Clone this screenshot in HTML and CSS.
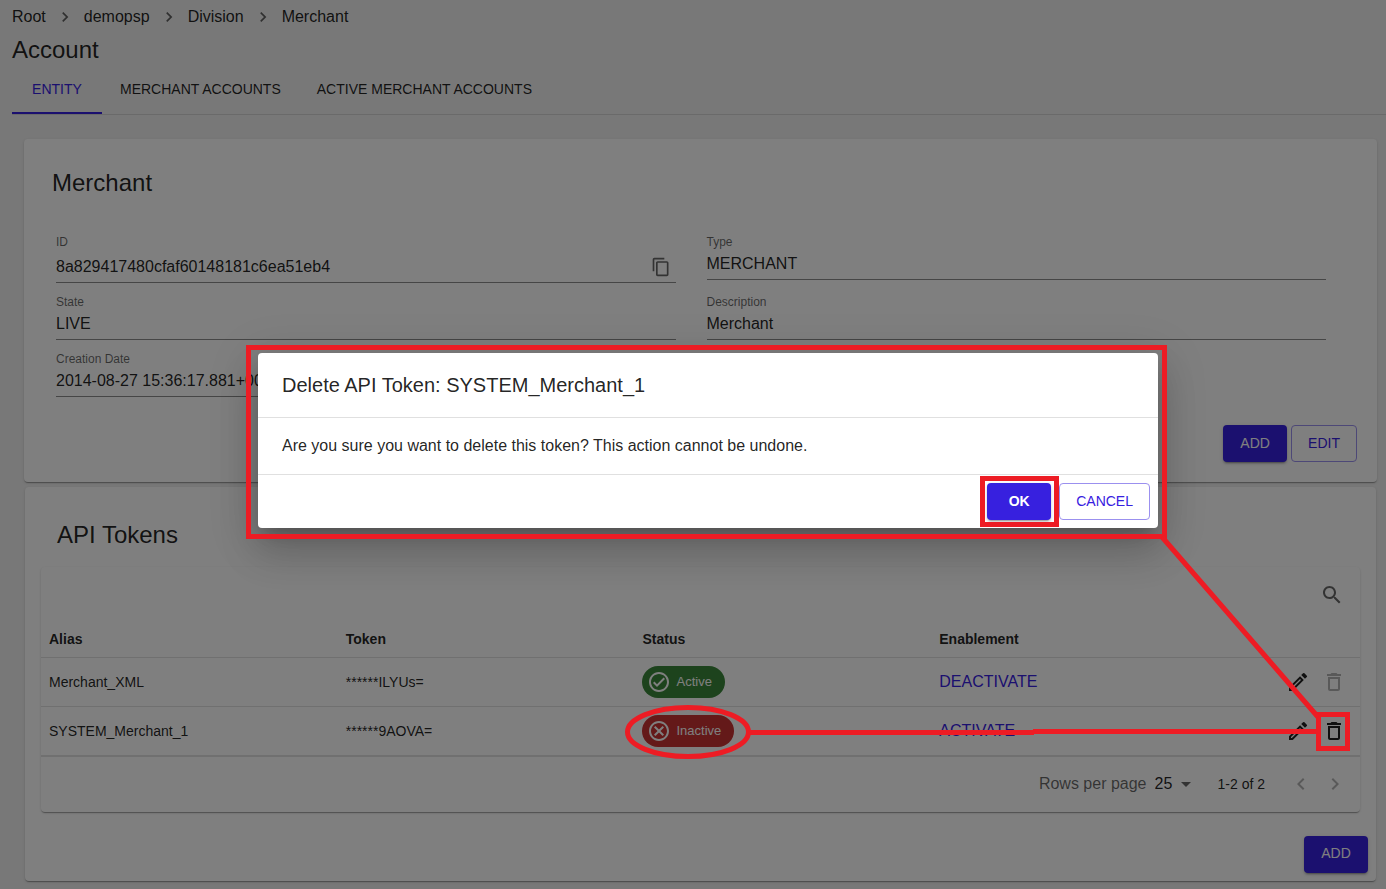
FILE: index.html
```html
<!DOCTYPE html>
<html lang="en">
<head>
<meta charset="utf-8">
<meta name="viewport" content="width=device-width, initial-scale=1">
<title>Account</title>
<link rel="stylesheet" href="styles.css">
</head>
<body>
<svg class="sprite" aria-hidden="true">
  <symbol id="next" viewBox="0 0 24 24"><path d="M10 6 8.590 7.410 13.170 12l-4.580 4.590L10 18l6-6z"/></symbol>
  <symbol id="prev" viewBox="0 0 24 24"><path d="M15.410 7.410 14 6l-6 6 6 6 1.410-1.410L10.830 12z"/></symbol>
  <symbol id="copy" viewBox="0 0 24 24"><path d="M16 1H4c-1.100 0-2 .9-2 2v14h2V3h12V1zm3 4H8c-1.100 0-2 .9-2 2v14c0 1.100.9 2 2 2h11c1.100 0 2-.9 2-2V7c0-1.100-.9-2-2-2zm0 16H8V7h11v14z"/></symbol>
  <symbol id="search" viewBox="0 0 24 24"><path d="M15.500 14h-.79l-.28-.27C15.410 12.590 16 11.110 16 9.500 16 5.910 13.090 3 9.500 3S3 5.910 3 9.500 5.910 16 9.500 16c1.610 0 3.090-.59 4.230-1.570l.27.28v.79l5 4.990L20.490 19l-4.990-5zm-6 0C7.010 14 5 11.990 5 9.500S7.010 5 9.500 5 14 7.010 14 9.500 11.990 14 9.500 14z"/></symbol>
  <symbol id="pencil" viewBox="0 0 24 24"><path d="M17.750 3a1 1 0 0 0-.7.290l-1.830 1.830 3.750 3.750 1.830-1.830a1 1 0 0 0 0-1.410l-2.340-2.340a1 1 0 0 0-.71-.29zM14.060 6.190 3 17.250V21h3.750L17.810 9.940l-3.750-3.750zm0 2.820.93.93L5.920 19H5v-.92l9.060-9.070z"/></symbol>
  <symbol id="trash" viewBox="0 0 24 24"><path d="M6 19c0 1.100.9 2 2 2h8c1.100 0 2-.9 2-2V7H6v12zM8 9h8v10H8V9zm7.500-5-1-1h-5l-1 1H5v2h14V4z"/></symbol>
  <symbol id="ok" viewBox="0 0 24 24"><path d="M12 2C6.480 2 2 6.480 2 12s4.480 10 10 10 10-4.480 10-10S17.520 2 12 2zm0 18c-4.410 0-8-3.590-8-8s3.590-8 8-8 8 3.590 8 8-3.590 8-8 8zm4.590-12.420L10 14.170l-2.590-2.580L6 13l4 4 8-8z"/></symbol>
  <symbol id="cross" viewBox="0 0 24 24"><path d="M12 2C6.470 2 2 6.470 2 12s4.470 10 10 10 10-4.470 10-10S17.530 2 12 2zm0 18c-4.410 0-8-3.590-8-8s3.590-8 8-8 8 3.590 8 8-3.590 8-8 8zM15.600 7 12 10.600 8.400 7 7 8.400 10.600 12 7 15.600 8.400 17 12 13.400 15.600 17 17 15.600 13.400 12 17 8.400z"/></symbol>
  <symbol id="drop" viewBox="0 0 24 24"><path d="m7 10 5 5 5-5z"/></symbol>
</svg>

<div class="page">
  <nav class="crumbs" aria-label="Breadcrumb">
    <a href="#">Root</a><svg class="icon-sm"><use href="#next"/></svg>
    <a href="#">demopsp</a><svg class="icon-sm"><use href="#next"/></svg>
    <a href="#">Division</a><svg class="icon-sm"><use href="#next"/></svg>
    <a href="#">Merchant</a>
  </nav>
  <h1 class="title">Account</h1>
  <div class="tabs" role="tablist">
    <button class="tab tab-active" role="tab" aria-selected="true">ENTITY</button>
    <button class="tab" role="tab">MERCHANT ACCOUNTS</button>
    <button class="tab" role="tab">ACTIVE MERCHANT ACCOUNTS</button>
  </div>

  <main class="cards">
    <section class="card entity">
      <h2 class="title">Merchant</h2>
      <div class="fields">
        <div class="field">
          <label for="id">ID</label>
          <div class="control control-icon">
            <input id="id" value="8a829417480cfaf60148181c6ea51eb4" readonly>
            <button class="icon-btn muted" aria-label="Copy ID"><svg class="icon-sm"><use href="#copy"/></svg></button>
          </div>
        </div>
        <div class="field">
          <label for="type">Type</label>
          <div class="control"><input id="type" value="MERCHANT" readonly></div>
        </div>
        <div class="field">
          <label for="state">State</label>
          <div class="control"><input id="state" value="LIVE" readonly></div>
        </div>
        <div class="field">
          <label for="description">Description</label>
          <div class="control"><input id="description" value="Merchant" readonly></div>
        </div>
        <div class="field">
          <label for="created">Creation Date</label>
          <div class="control"><input id="created" value="2014-08-27 15:36:17.881+0000" readonly></div>
        </div>
      </div>
      <div class="actions">
        <button class="btn btn-fill">ADD</button>
        <button class="btn btn-line">EDIT</button>
      </div>
    </section>

    <section class="card tokens">
      <h2 class="title">API Tokens</h2>
      <div class="card table-card">
        <div class="toolbar">
          <button class="icon-btn muted" aria-label="Search"><svg class="icon"><use href="#search"/></svg></button>
        </div>
        <table>
          <thead>
            <tr><th>Alias</th><th>Token</th><th>Status</th><th>Enablement</th><th class="tools"></th></tr>
          </thead>
          <tbody>
            <tr>
              <td>Merchant_XML</td><td>******ILYUs=</td>
              <td><span class="chip chip-on"><svg class="icon"><use href="#ok"/></svg>Active</span></td>
              <td><button class="link">DEACTIVATE</button></td>
              <td class="tools"><div class="tool-row">
                <button class="icon-btn" aria-label="Edit"><svg class="icon"><use href="#pencil"/></svg></button>
                <button class="icon-btn" aria-label="Delete" disabled><svg class="icon"><use href="#trash"/></svg></button>
              </div></td>
            </tr>
            <tr>
              <td>SYSTEM_Merchant_1</td><td>******9AOVA=</td>
              <td><span class="chip chip-off"><svg class="icon"><use href="#cross"/></svg>Inactive</span></td>
              <td><button class="link">ACTIVATE</button></td>
              <td class="tools"><div class="tool-row">
                <button class="icon-btn" aria-label="Edit"><svg class="icon"><use href="#pencil"/></svg></button>
                <button class="icon-btn" aria-label="Delete"><svg class="icon"><use href="#trash"/></svg></button>
              </div></td>
            </tr>
          </tbody>
        </table>
        <div class="pager">
          <label for="rows">Rows per page</label>
          <div class="select">
            <select id="rows"><option>25</option><option>50</option></select>
            <svg class="icon muted"><use href="#drop"/></svg>
          </div>
          <span class="range">1-2 of 2</span>
          <button class="icon-btn" aria-label="Previous page" disabled><svg class="icon"><use href="#prev"/></svg></button>
          <button class="icon-btn" aria-label="Next page" disabled><svg class="icon"><use href="#next"/></svg></button>
        </div>
      </div>
      <div class="actions"><button class="btn btn-fill">ADD</button></div>
    </section>
  </main>
</div>

<div class="backdrop">
  <div class="dialog" role="dialog" aria-modal="true" aria-labelledby="dialog-title">
    <h2 id="dialog-title">Delete API Token: SYSTEM_Merchant_1</h2>
    <p>Are you sure you want to delete this token? This action cannot be undone.</p>
    <div class="dialog-actions">
      <button class="btn btn-fill btn-strong">OK</button>
      <button class="btn btn-line">CANCEL</button>
    </div>
  </div>
</div>

<svg class="markup" viewBox="0 0 1386 889" aria-hidden="true">
  <rect x="248.500" y="347.500" width="916" height="189"/>
  <rect x="982.500" y="478.500" width="74" height="46"/>
  <rect x="1318.500" y="714.500" width="29" height="34"/>
  <ellipse cx="688" cy="732" rx="60.500" ry="24.500"/>
  <path d="M749 732.500H1034M1033 731.500H1317M1162 537 1318 717"/>
</svg>
</body>
</html>
```
FILE: styles.css
```css
* { box-sizing: border-box; }

:root {
  --ink: rgba(0, 0, 0, .87);
  --muted: rgba(0, 0, 0, .6);
  --rule: #e0e0e0;
  --primary: #3720df;
}

body {
  position: relative;
  min-height: 100vh;
  margin: 0;
  background: #f0f0f0;
  color: var(--ink);
  font: 16px/24px "Liberation Sans", Arial, sans-serif;
}

button, input, select { font: inherit; color: inherit; }
button { padding: 0; border: 0; background: none; cursor: pointer; }
svg { display: block; fill: currentColor; }

.sprite { position: absolute; width: 0; height: 0; }
.icon { width: 24px; height: 24px; flex: none; }
.icon-sm { width: 20px; height: 20px; flex: none; }
.muted { color: var(--muted); }

.page { padding: 5px 0 8px; }

.crumbs {
  display: flex;
  align-items: center;
  gap: 9px;
  padding-left: 12px;
}
.crumbs a { color: inherit; text-decoration: none; }
.crumbs svg { color: var(--muted); }

.title { margin: 0; font-size: 24px; line-height: 32px; font-weight: 400; }
.page > .title { padding: 5px 12px 0; }

.tabs {
  display: flex;
  margin-left: 12px;
  border-bottom: 1px solid #d4d4d4;
}
.tab {
  min-width: 90px;
  height: 48px;
  padding: 0 18px;
  border-bottom: 2px solid transparent;
  font-size: 14px;
}
.tab-active { color: var(--primary); border-color: var(--primary); }

.cards {
  display: flex;
  flex-direction: column;
  gap: 5px;
  padding: 24px 9px 0 24px;
}
.card {
  border-radius: 4px;
  background: #fff;
  box-shadow: 0 2px 1px -1px rgba(0, 0, 0, .2), 0 1px 1px rgba(0, 0, 0, .14), 0 1px 3px rgba(0, 0, 0, .12);
}

.entity { padding: 28px 20px 20px 28px; }
.fields {
  display: grid;
  grid-template-columns: 1fr 1fr;
  gap: 10px 31px;
  margin: 34px 31px 28px 4px;
}
.field label {
  display: block;
  color: var(--muted);
  font-size: 12px;
  line-height: 18px;
}
.control {
  display: flex;
  align-items: center;
  padding: 1px 0 3px;
  border-bottom: 1px solid #8c8c8c;
}
.control input {
  flex: 1;
  min-width: 0;
  height: 24px;
  padding: 0;
  border: 0;
  outline: 0;
  background: none;
}
.control-icon { height: 32px; padding: 0 5px 0 0; }

.actions { display: flex; justify-content: flex-end; gap: 4px; }
.btn {
  min-width: 64px;
  height: 37px;
  padding: 0 16px 2px;
  border: 1px solid transparent;
  border-radius: 4px;
  font-size: 14px;
}
.btn-fill {
  padding: 0 15px 2px;
  background: var(--primary);
  color: #fff;
  box-shadow: 0 3px 1px -2px rgba(0, 0, 0, .2), 0 2px 2px rgba(0, 0, 0, .14), 0 1px 5px rgba(0, 0, 0, .12);
}
.btn-line { color: var(--primary); border-color: #9b90ef; }
.btn-strong { font-weight: 700; }

.tokens { margin: 0 1px; padding: 32px 8px 8px 16px; }
.tokens > .title { padding-left: 16px; }
.table-card { margin: 16px 8px 24px 0; }
.toolbar {
  display: flex;
  justify-content: flex-end;
  height: 55px;
  padding: 0 16px 0 0;
}

table {
  width: 100%;
  border-collapse: collapse;
  table-layout: fixed;
  font-size: 14px;
}
th, td {
  height: 49px;
  padding: 0 8px;
  border-bottom: 1px solid var(--rule);
  text-align: left;
}
th { height: 35px; }
.tools { width: 132px; }
td.tools { padding-right: 14px; }
.tool-row { display: flex; justify-content: flex-end; gap: 12px; }
.icon-btn { display: flex; align-items: center; }
.icon-btn:disabled { color: rgba(0, 0, 0, .3); cursor: default; }
.link { color: var(--primary); font-size: 16px; }

.chip {
  display: inline-flex;
  align-items: center;
  gap: 6px;
  height: 32px;
  margin-left: -1px;
  padding: 0 13px 0 5px;
  border-radius: 16px;
  color: #fff;
  font-size: 13px;
  vertical-align: middle;
}
.chip-on { background: #3b873a; }
.chip-off { background: #c83232; }

.pager {
  display: flex;
  align-items: center;
  justify-content: flex-end;
  height: 56px;
  padding-right: 13px;
  border-top: 1px solid var(--rule);
}
.pager label { color: var(--muted); }
.select { position: relative; margin: 0 20px 0 8px; }
.select select {
  width: 43px;
  height: 24px;
  padding: 0;
  border: 0;
  background: none;
  appearance: none;
}
.select svg { position: absolute; right: 0; top: 0; pointer-events: none; }
.range { margin-right: 24px; font-size: 14px; }
.pager .icon-btn + .icon-btn { margin-left: 10px; }

.backdrop {
  position: absolute;
  inset: 0;
  display: flex;
  align-items: center;
  justify-content: center;
  padding: 0 0 8px 30px;
  background: rgba(0, 0, 0, .5);
}
.dialog {
  width: 900px;
  max-width: 90%;
  border-radius: 4px;
  background: #fff;
  box-shadow: 0 11px 15px -7px rgba(0, 0, 0, .2), 0 24px 38px 3px rgba(0, 0, 0, .14), 0 9px 46px 8px rgba(0, 0, 0, .12);
}
.dialog h2 {
  margin: 0;
  padding: 16px 24px;
  font-size: 20px;
  line-height: 32px;
  font-weight: 400;
}
.dialog p {
  margin: 0;
  padding: 16px 24px;
  border: solid var(--rule);
  border-width: 1px 0;
}
.dialog-actions { display: flex; justify-content: flex-end; gap: 8px; padding: 8px; }

.markup {
  position: absolute;
  top: 0;
  left: 0;
  width: 1386px;
  height: 889px;
  fill: none;
  stroke: #ed1c24;
  stroke-width: 5;
  pointer-events: none;
}
```
